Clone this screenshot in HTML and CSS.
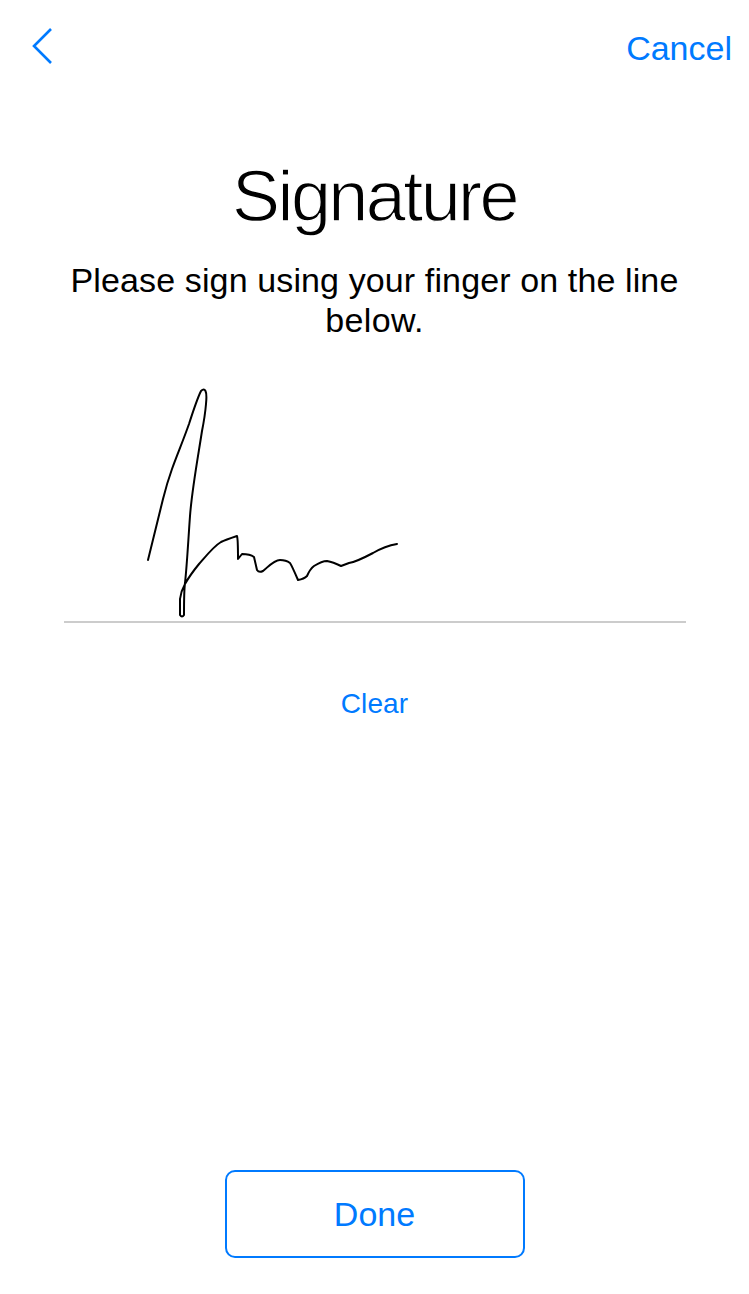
FILE: index.html
```html
<!DOCTYPE html>
<html lang="en">
<head>
<meta charset="utf-8">
<title>Signature</title>
<link rel="stylesheet" href="styles.css">
</head>
<body>
<div class="screen">
  <header class="nav">
    <button class="back" aria-label="Back">
      <svg width="24" height="40" viewBox="0 0 24 40"><path d="M20 3 3 20 20 37"/></svg>
    </button>
    <button class="cancel">Cancel</button>
  </header>
  <main class="content">
    <h1 class="title">Signature</h1>
    <p class="hint"><span class="hint-line">Please sign using your finger on the line</span> <span class="hint-line hint-end">below.</span></p>
    <div class="pad">
      <svg class="ink" width="622" height="240" viewBox="64 380 622 240">
        <path d="M148 560L163 499Q167 483 172 469C177 455 183 441 189 424Q197 399 201 391Q204 388 205.500 391Q207 394 206 404Q205 416 202 431C198 457 192 489 190 516C188 544 187 565 185 583Q184 590 184 615Q182 618 180 615V599Q181 591 185 584Q190 575 199 564C206 556 214 546 221 542Q225 540 237 536Q238 539 238 559L242 554Q250 554 254 557L257 570Q259 573 263 571C268 567 274 560 280 560Q286 560 290 563Q292 566 298 580Q304 579 307 576Q310 569 314 566Q322 561 327 561Q333 562 341 566L349 563Q356 562 373 553Q385 546 397 544"/>
      </svg>
    </div>
    <button class="clear">Clear</button>
  </main>
  <footer class="actions">
    <button class="done">Done</button>
  </footer>
</div>
</body>
</html>
```
FILE: styles.css
```css
* { box-sizing: border-box; }
body {
  margin: 0;
  background: #fff;
  color: #000;
  font-family: "Liberation Sans", Arial, sans-serif;
}
button {
  padding: 0;
  border: 0;
  background: none;
  color: #007aff;
  font-family: inherit;
}
.screen {
  display: flex;
  flex-direction: column;
  height: 1294px;
  padding-bottom: 36px;
}
.nav {
  display: flex;
  justify-content: space-between;
  align-items: flex-start;
  height: 156px;
  padding: 26px 17px 0 31px;
}
.back { height: 40px; }
.back svg {
  display: block;
  fill: none;
  stroke: #007aff;
  stroke-width: 2.6;
}
.cancel {
  margin-top: 2px;
  font-size: 34px;
  line-height: 40px;
}
.content {
  display: flex;
  flex: 1;
  flex-direction: column;
  align-items: center;
}
.title {
  margin: 0;
  font-size: 72px;
  font-weight: 400;
  line-height: 80px;
  letter-spacing: -2.6px;
  -webkit-text-stroke: 1.3px #fff;
}
.hint {
  margin: 24px 0 0;
  font-size: 34px;
  line-height: 40px;
  text-align: center;
}
.hint-line {
  display: block;
  letter-spacing: 0.12px;
  white-space: nowrap;
}
.hint-end { letter-spacing: 0.35px; }
.pad {
  width: 622px;
  height: 243px;
  margin-top: 40px;
  border-bottom: 2px solid #ccc;
}
.ink {
  display: block;
  fill: none;
  stroke: #000;
  stroke-width: 2;
  stroke-linecap: round;
  stroke-linejoin: round;
}
.clear {
  margin-top: 65px;
  font-size: 28px;
  line-height: 32px;
  letter-spacing: 0.15px;
}
.actions {
  display: flex;
  justify-content: center;
}
.done {
  width: 300px;
  height: 88px;
  border: 2px solid #007aff;
  border-radius: 10px;
  font-size: 34px;
  line-height: 40px;
}
```
